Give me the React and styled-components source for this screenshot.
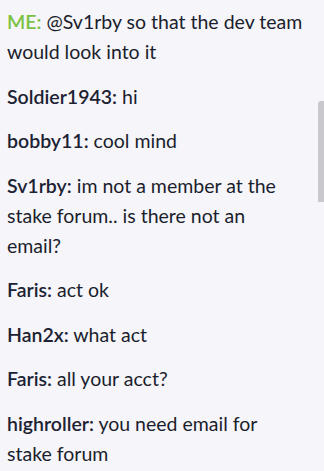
import React from "react";
import styled, { createGlobalStyle } from "styled-components";

const GlobalStyle = createGlobalStyle`
  html, body {
    margin: 0;
    padding: 0;
    background: #f5f5fa;
  }
  body {
    font-family: Lato, "Liberation Sans", sans-serif;
  }
`;

// line breaks follow the chat width of the original screen
const messages = [
  { name: "ME", text: "@Sv1rby so that the dev team\nwould look into it", me: true },
  { name: "Soldier1943", text: "hi" },
  { name: "bobby11", text: "cool mind" },
  { name: "Sv1rby", text: "im not a member at the\nstake forum.. is there not an\nemail?" },
  { name: "Faris", text: "act ok" },
  { name: "Han2x", text: "what act" },
  { name: "Faris", text: "all your acct?" },
  { name: "highroller", text: "you need email for\nstake forum" },
];

const Chat = () => {
  return (
    <Panel>
      <List>
        {messages.map((m, i) => (
          <Message key={i}>
            <Name $me={m.me}>{m.name}:</Name> {m.text}
          </Message>
        ))}
      </List>
      <Thumb />
    </Panel>
  );
};

const Panel = styled.div`
  position: relative;
  width: 324px;
  height: 471px;
  overflow: hidden;
  background: #f5f5fa;
`;

const List = styled.div`
  display: flex;
  flex-direction: column;
  gap: 14.5px;
  padding: 7px 10px 0 7px;
`;

const Message = styled.p`
  margin: 0;
  font-size: 19.5px;
  line-height: 30px;
  color: #1b1e2c;
  white-space: pre-line;
`;

const Name = styled.span`
  font-weight: 600;
  color: ${(p) => (p.$me ? "#7cc242" : "#1d2233")};
`;

const Thumb = styled.div`
  position: absolute;
  top: 101px;
  right: 0;
  width: 6px;
  height: 101px;
  border-radius: 3px 0 0 0;
  background: #c9c9cd;
`;

export default function App() {
  return (
    <>
      <GlobalStyle />
      <Chat />
    </>
  );
}
